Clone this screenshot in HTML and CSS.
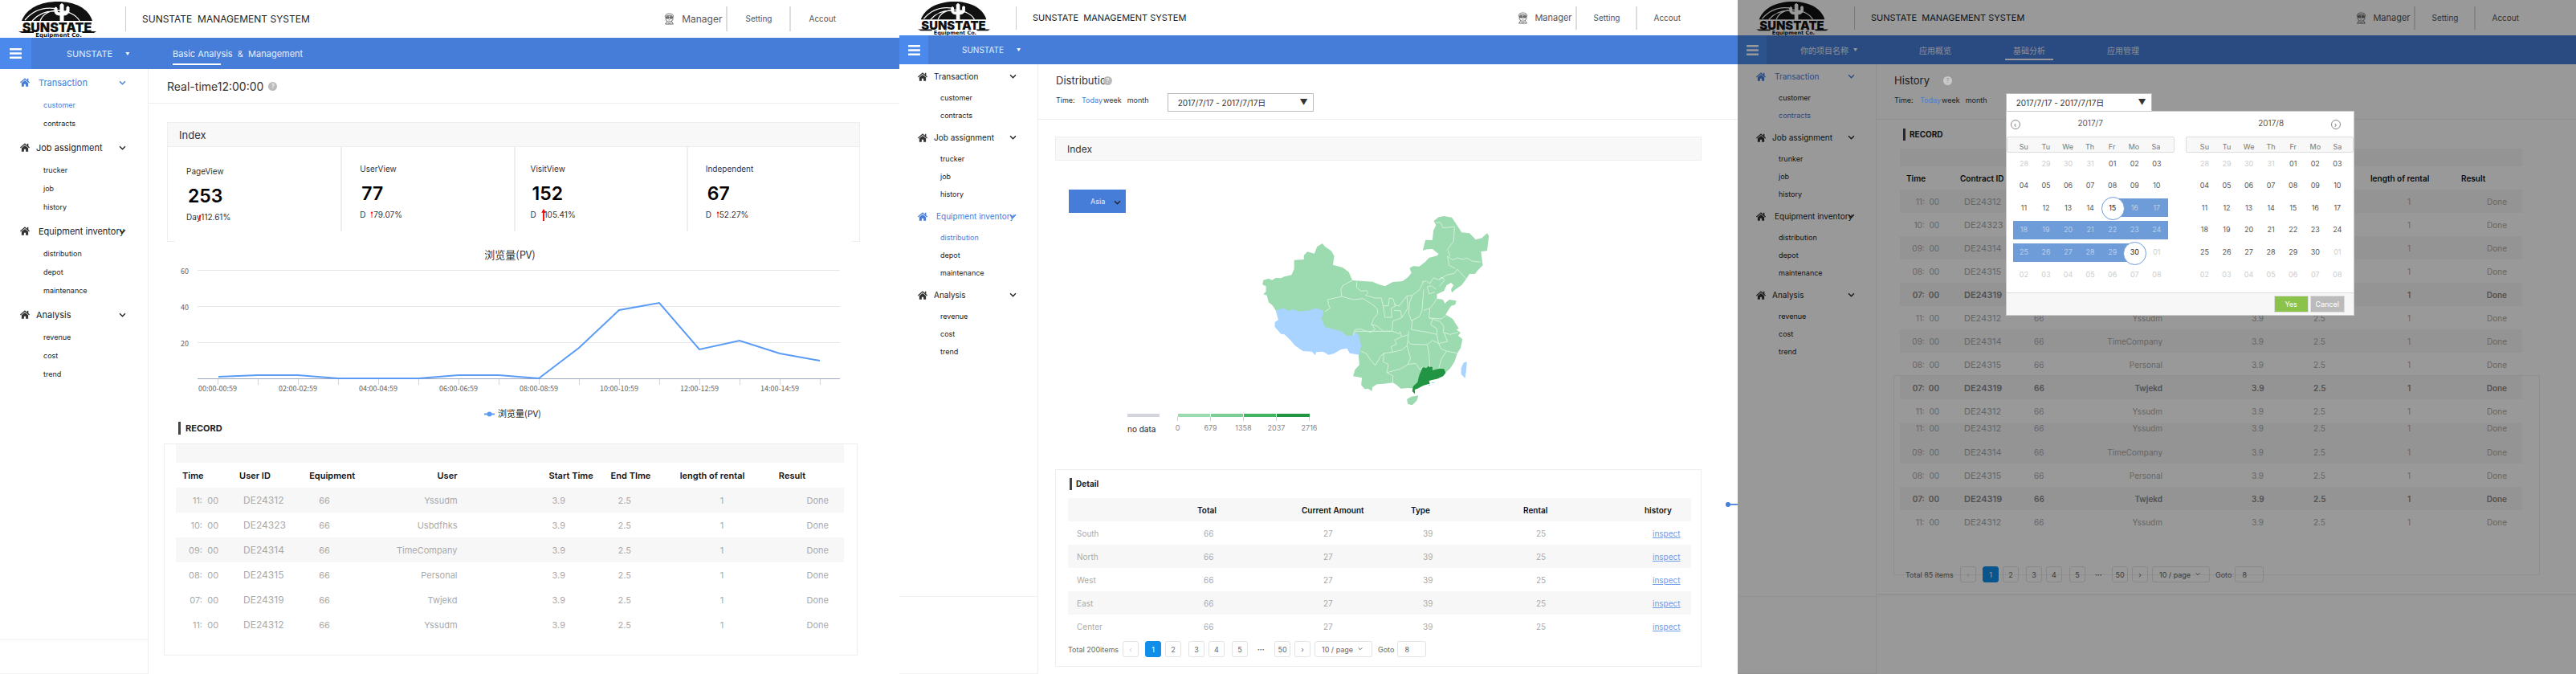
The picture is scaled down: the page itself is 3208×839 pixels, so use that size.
FILE: index.html
```html
<!DOCTYPE html>
<html lang="en">
<head>
<meta charset="utf-8">
<title>Sunstate Management System</title>
<link rel="stylesheet" href="styles.css">
</head>
<body>
<svg class="defs" aria-hidden="true">
  <symbol id="logo" viewBox="0 0 97 46">
    <path d="M4 25C10 9 28 1 49 1s38 8 43 24z"/>
    <path d="M8 24C18 12 32 7 48 10M17 25C24 17 34 12 47 13M27 25C30 17 38 12 49 12s23 5 27 13" fill="none" stroke="#fff" stroke-width="1.3"/>
    <path d="M52 25V5q2-3 4 0v9q4 0 4-3V8q1.500-2 3 0v5q-1 5-7 5v7zM52 18q-7 0-7-5V9q1.500-2 3 0v4q1 2 4 2z" fill="#fff" stroke="#fff"/>
    <text class="logo-name" x="48" y="39" text-anchor="middle">SUNSTATE</text>
    <path d="M0 38h19v2H4zM78 38h19l-3 2H80z"/>
    <text class="logo-sub" x="50" y="45" text-anchor="middle">Equipment Co.</text>
  </symbol>
  <symbol id="home" viewBox="0 0 16 14">
    <path d="M8 0 0 7l1 1.200L8 2.400l7 5.800L16 7l-2.200-2V.8h-2v2.500z"/>
    <path d="M8 3.500 2.500 8v6h4v-4h3v4h4V8z"/>
  </symbol>
  <symbol id="chev" viewBox="0 0 10 7"><path d="M1 1.500 5 5.500l4-4" fill="none" stroke="currentColor" stroke-width="1.600"/></symbol>
  <symbol id="user" viewBox="0 0 14 16">
    <g fill="none" stroke="#555" stroke-width=".9"><path d="M1.500 6C1 2 4 1 7 1s6 1 5.500 5M2 7c0 3 2 5 5 5s5-2 5-5M3 3.500h8M4 11 2 15M10 11l2 4M1.500 15h11M6 9.500h2M5 13l2 2 2-2"/><path d="M2.500 5h3.800v2.500H3zM7.700 5h3.800L11 7.500H7.700z" fill="#777"/></g>
  </symbol>
  <symbol id="menu" viewBox="0 0 16 14"><path d="M0 0h16v2.600H0zM0 5.700h16v2.600H0zM0 11.400h16V14H0z"/></symbol>
</svg>

<div class="board">
<!-- Real-time screen -->
<section class="screen large">
  <header class="top">
    <svg class="logo"><use href="#logo"/></svg>
    <h1 class="title">SUNSTATE  MANAGEMENT SYSTEM</h1>
    <div class="account">
      <svg class="avatar"><use href="#user"/></svg>
      <a class="who" href="#">Manager</a><a class="opt" href="#">Setting</a><a class="opt" href="#">Accout</a>
    </div>
  </header>
  <nav class="bar">
    <button class="menu" aria-label="Menu"><svg><use href="#menu"/></svg></button>
    <a class="project" href="#">SUNSTATE<span class="caret">▼</span></a>
    <a class="tab current" href="#">Basic Analysis  &amp;  Management</a>
  </nav>
  <div class="body">
    <aside class="side">
      <div class="group"><a class="head on shift" href="#"><svg class="home"><use href="#home"/></svg>Transaction<svg class="chev"><use href="#chev"/></svg></a><a class="on" href="#">customer</a><a href="#">contracts</a></div>
      <div class="group"><a class="head" href="#"><svg class="home"><use href="#home"/></svg>Job assignment<svg class="chev"><use href="#chev"/></svg></a><a href="#">trucker</a><a href="#">job</a><a href="#">history</a></div>
      <div class="group"><a class="head shift" href="#"><svg class="home"><use href="#home"/></svg>Equipment inventory<svg class="chev"><use href="#chev"/></svg></a><a href="#">distribution</a><a href="#">depot</a><a href="#">maintenance</a></div>
      <div class="group"><a class="head" href="#"><svg class="home"><use href="#home"/></svg>Analysis<svg class="chev"><use href="#chev"/></svg></a><a href="#">revenue</a><a href="#">cost</a><a href="#">trend</a></div>
      <div class="side-foot"></div>
    </aside>
    <main class="main">
      <div class="page-head"><h2>Real-time12:00:00</h2><span class="help">?</span></div>
      <div class="content">
        <section class="card index">
          <h3 class="card-head">Index</h3>
          <div class="stats">
            <div class="stat low"><span>PageView</span><strong>253</strong><span>Day<svg class="up tight" viewBox="0 0 4 10"><path d="M2 0 4 3H2.800v7H1.200V3H0z"/></svg>112.61%</span></div>
            <div class="stat"><span>UserView</span><strong>77</strong><span>D <svg class="up" viewBox="0 0 4 10"><path d="M2 0 4 3H2.500v7h-1V3H0z"/></svg>79.07%</span></div>
            <div class="stat near"><span>VisitView</span><strong>152</strong><span>D <svg class="up big" viewBox="0 0 6 16"><path d="M3 0 6 5H4v11H2V5H0z"/></svg>105.41%</span></div>
            <div class="stat"><span>Independent</span><strong>67</strong><span>D <svg class="up" viewBox="0 0 4 10"><path d="M2 0 4 3H2.500v7h-1V3H0z"/></svg>52.27%</span></div>
          </div>
        </section>
        <svg class="chart" viewBox="219 299 843 226">
          <text class="c-title" x="636" y="322" text-anchor="middle">浏览量(PV)</text>
          <path class="grid" d="M247 336.500h800M247 381.500h800M247 426.500h800"/>
          <g class="c-num" text-anchor="end"><text x="236" y="341">60</text><text x="236" y="386">40</text><text x="236" y="431">20</text></g>
          <path class="tick" d="M272.500 472v7M322.500 472v7M372.500 472v7M422.500 472v7M472.500 472v7M522.500 472v7M572.500 472v7M622.500 472v7M672.500 472v7M722.500 472v7M772.500 472v7M822.500 472v7M872.500 472v7M922.500 472v7M972.500 472v7M1022.500 472v7"/>
          <path class="axis" d="M247 471.500h800"/>
          <polyline class="line" points="273,469 322,467 372,467 422,471 472,471 522,471 572,467 622,467 672,471 722,433 772,386 822,377 872,435 922,424 972,440 1022,449"/>
          <g class="c-num" text-anchor="middle"><text x="272" y="487">00:00-00:59</text><text x="372" y="487">02:00-02:59</text><text x="472" y="487">04:00-04:59</text><text x="572" y="487">06:00-06:59</text><text x="672" y="487">08:00-08:59</text><text x="772" y="487">10:00-10:59</text><text x="872" y="487">12:00-12:59</text><text x="972" y="487">14:00-14:59</text></g>
          <path class="line" d="M604 515.500h13"/><circle class="dot" cx="610.500" cy="515.500" r="3"/>
          <text class="c-legend" x="621" y="519">浏览量(PV)</text>
        </svg>
        <h3 class="mark">RECORD</h3>
        <section class="card records">
          <div class="band"></div>
          <table class="log">
            <thead><tr><th>Time</th><th>User ID</th><th>Equipment</th><th>User</th><th>Start Time</th><th>End TIme</th><th>length of rental</th><th>Result</th></tr></thead>
            <tbody>
              <tr class="alt"><td>11:  00</td><td>DE24312</td><td>66</td><td>Yssudm</td><td>3.9</td><td>2.5</td><td>1</td><td>Done</td></tr>
              <tr><td>10:  00</td><td>DE24323</td><td>66</td><td>Usbdfhks</td><td>3.9</td><td>2.5</td><td>1</td><td>Done</td></tr>
              <tr class="alt"><td>09:  00</td><td>DE24314</td><td>66</td><td>TimeCompany</td><td>3.9</td><td>2.5</td><td>1</td><td>Done</td></tr>
              <tr><td>08:  00</td><td>DE24315</td><td>66</td><td>Personal</td><td>3.9</td><td>2.5</td><td>1</td><td>Done</td></tr>
              <tr><td>07:  00</td><td>DE24319</td><td>66</td><td>Twjekd</td><td>3.9</td><td>2.5</td><td>1</td><td>Done</td></tr>
              <tr><td>11:  00</td><td>DE24312</td><td>66</td><td>Yssudm</td><td>3.9</td><td>2.5</td><td>1</td><td>Done</td></tr>
            </tbody>
          </table>
        </section>
      </div>
    </main>
  </div>
</section>

<!-- Distribution screen -->
<section class="screen">
  <header class="top">
    <svg class="logo"><use href="#logo"/></svg>
    <h1 class="title">SUNSTATE  MANAGEMENT SYSTEM</h1>
    <div class="account">
      <svg class="avatar"><use href="#user"/></svg>
      <a class="who" href="#">Manager</a><a class="opt" href="#">Setting</a><a class="opt" href="#">Accout</a>
    </div>
  </header>
  <nav class="bar">
    <button class="menu" aria-label="Menu"><svg><use href="#menu"/></svg></button>
    <a class="project" href="#">SUNSTATE<span class="caret">▼</span></a>
  </nav>
  <div class="body">
    <aside class="side">
      <div class="group"><a class="head" href="#"><svg class="home"><use href="#home"/></svg>Transaction<svg class="chev"><use href="#chev"/></svg></a><a href="#">customer</a><a href="#">contracts</a></div>
      <div class="group"><a class="head" href="#"><svg class="home"><use href="#home"/></svg>Job assignment<svg class="chev"><use href="#chev"/></svg></a><a href="#">trucker</a><a href="#">job</a><a href="#">history</a></div>
      <div class="group"><a class="head on shift" href="#"><svg class="home"><use href="#home"/></svg>Equipment inventory<svg class="chev"><use href="#chev"/></svg></a><a class="on" href="#">distribution</a><a href="#">depot</a><a href="#">maintenance</a></div>
      <div class="group"><a class="head" href="#"><svg class="home"><use href="#home"/></svg>Analysis<svg class="chev"><use href="#chev"/></svg></a><a href="#">revenue</a><a href="#">cost</a><a href="#">trend</a></div>
      <div class="side-foot"></div>
    </aside>
    <main class="main">
      <div class="page-head tall"><div class="head-row"><h2>Distributio</h2><span class="help over">?</span></div>
        <div class="filters"><span class="f-label">Time:</span><a class="on" href="#">Today</a><a href="#">week</a><a class="far" href="#">month</a>
          <div class="pick"><select aria-label="Date range"><option>2017/7/17 - 2017/7/17日</option></select><span class="tri">▼</span></div></div>
      </div>
      <div class="content">
        <section class="card index"><h3 class="card-head">Index</h3></section>
        <div class="region"><select aria-label="Region"><option>Asia</option></select><svg class="chev"><use href="#chev"/></svg></div>
        <svg class="map" viewBox="530 410 525 720" preserveAspectRatio="none">
          <path class="land" d="M536 655 548 649 556 655 564 647 576 648 584 642 600 636 606 613 606 580 628 578 628 562 636 549 652 556 658 530 670 518 676 530 690 546 697 565 694 598 716 608 730 625 738 656 784 661 798 671 812 678 830 662 852 659 864 645 872 628 868 610 876 603 890 604 904 586 912 572 930 564 934 558 920 539 908 540 898 544 904 505 920 506 922 470 928 450 923 434 934 420 946 416 964 421 974 446 986 477 1004 480 1018 504 1032 498 1044 480 1048 490 1044 546 1030 548 1034 600 1024 616 1016 632 1004 632 996 652 986 674 972 690 964 702 962 690 968 674 962 665 952 674 946 696 930 708 930 724 944 728 948 742 958 728 974 732 972 746 962 752 954 772 950 784 966 800 974 822 980 836 974 840 984 852 978 862 988 876 984 908 976 930 970 960 960 985 950 1000 940 1012 916 1030 896 1046 880 1060 864 1058 848 1060 838 1046 830 1038 810 1042 794 1044 784 1054 782 1070 774 1060 766 1062 758 1046 760 1020 740 1014 744 990 754 972 752 930 740 900 680 870 600 800 564 768 556 748 548 738 544 712 536 708 542 698 542 678 534 672z"/>
          <path class="blue" d="M564 768 582 760 594 770 604 764 618 772 640 768 654 760 672 768 672 780 668 800 676 830 712 846 726 864 738 862 744 846 754 866 758 900 754 934 732 928 726 910 712 914 696 930 684 934 672 922 656 924 654 936 646 922 626 920 608 900 598 880 584 858 576 856 562 830 562 812 570 804z"/>
          <path class="dark" d="M898 980 906 984 910 977 920 980 920 992 934 986 946 986 950 1002 944 1014 930 1024 912 1030 914 1042 900 1048 886 1060 880 1064 880 1080 874 1070 876 1052 886 1036 890 1010z"/>
          <path class="land" d="M872 1090 888 1086 884 1106 874 1122 864 1118 862 1100z"/>
          <path class="blue" d="M990 964 998 960 997 985 994 1022 985 1006 985 985zM918 1036h6v4h-6zM911 1045h4v4h-4z"/>
          <path class="edge" d="M738 656 716 676 712 690 714 716 740 728 762 724 780 742 794 760 796 780 786 800 782 820 790 838 780 850 770 846 758 838 744 840 740 862M714 716 698 722 682 728 684 748 688 760 676 772M748 660 748 684 758 696 770 694 774 702 768 712 790 722 804 722 808 752 820 750 822 722 830 724 836 752 826 760 828 794 812 794 808 752M780 820 794 826 808 846 828 846 830 808 850 796 848 770 832 768M832 746 844 752 862 714 874 712 890 692 900 660M862 714 864 760 850 796M900 690 896 770 890 792 872 806 866 780 868 740 874 712M874 806 872 840 904 848 930 858 930 836 916 822 920 800 912 796 914 760 900 768M928 690 918 676 908 680 912 706 926 700M896 662 906 658 914 668 922 646 934 654 940 644 948 654 936 678M936 654 952 636 970 630 976 614 996 650M954 566 966 580 976 572 990 578 998 572 1010 584 1030 588M954 566 958 600 972 612M928 440 938 440 944 460 970 456 968 510 954 540 960 566M930 724 922 745 914 760M912 796 940 800 954 784M920 800 938 810 946 830 944 850 960 858 978 850M946 850 954 884 934 892 930 858M866 846 864 880 870 894 908 896 920 880 934 892M846 846 850 866 864 860M850 866 834 880 838 894 826 904 830 924 850 916 862 900 864 880M758 920 770 930 778 950 790 974 802 940 810 928 830 924M862 900 870 946 864 970 882 966 892 990 898 980M908 896 912 930 914 980M934 892 940 912 952 920 940 950 934 986M952 920 976 928M810 928 808 960 820 970 816 1000 830 1012 830 1038M816 1000 846 988 864 970M744 846 808 846 828 846 846 856"/>
        </svg>
        <div class="scale">
          <div class="nodata"><i></i>no data</div>
          <div class="ramp"><div class="r1">0</div><div class="r2">679</div><div class="r3">1358</div><div class="r4">2037</div><div class="r5">2716</div></div>
        </div>
        <section class="card detail">
          <h3 class="mark">Detail</h3>
          <table class="areas">
            <thead><tr><th></th><th>Total</th><th>Current Amount</th><th>Type</th><th>Rental</th><th>history</th></tr></thead>
            <tbody>
              <tr><td>South</td><td>66</td><td>27</td><td>39</td><td>25</td><td><a href="#">inspect</a></td></tr>
              <tr class="alt"><td>North</td><td>66</td><td>27</td><td>39</td><td>25</td><td><a href="#">inspect</a></td></tr>
              <tr><td>West</td><td>66</td><td>27</td><td>39</td><td>25</td><td><a href="#">inspect</a></td></tr>
              <tr class="alt"><td>East</td><td>66</td><td>27</td><td>39</td><td>25</td><td><a href="#">inspect</a></td></tr>
              <tr><td>Center</td><td>66</td><td>27</td><td>39</td><td>25</td><td><a href="#">inspect</a></td></tr>
            </tbody>
          </table>
          <div class="pager"><span class="total">Total 200items</span><button class="faint">‹</button><button class="now">1</button><button>2</button><button class="gap">3</button><button>4</button><button class="gap">5</button><span class="dots">•••</span><button>50</button><button>›</button><span class="size"><select aria-label="Page size"><option>10 / page</option></select><svg class="chev"><use href="#chev"/></svg></span><label>Goto<input value="8"></label></div>
        </section>
      </div>
      <div class="handle"><i></i></div>
    </main>
  </div>
</section>

<!-- History screen with the date picker open -->
<section class="screen dimmed">
  <header class="top">
    <svg class="logo"><use href="#logo"/></svg>
    <h1 class="title">SUNSTATE  MANAGEMENT SYSTEM</h1>
    <div class="account">
      <svg class="avatar"><use href="#user"/></svg>
      <a class="who" href="#">Manager</a><a class="opt" href="#">Setting</a><a class="opt" href="#">Accout</a>
    </div>
  </header>
  <nav class="bar">
    <button class="menu" aria-label="Menu"><svg><use href="#menu"/></svg></button>
    <a class="project cn" href="#">你的项目名称<span class="caret">▼</span></a>
    <div class="tabs"><a class="tab" href="#">应用概览</a><a class="tab current" href="#">基础分析</a><a class="tab" href="#">应用管理</a></div>
  </nav>
  <div class="body">
    <aside class="side">
      <div class="group"><a class="head on shift" href="#"><svg class="home"><use href="#home"/></svg>Transaction<svg class="chev"><use href="#chev"/></svg></a><a href="#">customer</a><a class="on" href="#">contracts</a></div>
      <div class="group"><a class="head" href="#"><svg class="home"><use href="#home"/></svg>Job assignment<svg class="chev"><use href="#chev"/></svg></a><a href="#">trunker</a><a href="#">job</a><a href="#">history</a></div>
      <div class="group"><a class="head shift" href="#"><svg class="home"><use href="#home"/></svg>Equipment inventory<svg class="chev"><use href="#chev"/></svg></a><a href="#">distribution</a><a href="#">depot</a><a href="#">maintenance</a></div>
      <div class="group"><a class="head" href="#"><svg class="home"><use href="#home"/></svg>Analysis<svg class="chev"><use href="#chev"/></svg></a><a href="#">revenue</a><a href="#">cost</a><a href="#">trend</a></div>
      <div class="side-foot"></div>
    </aside>
    <main class="main">
      <div class="page-head tall"><div class="head-row"><h2>History</h2><span class="help lifted">?</span></div>
        <div class="filters"><span class="f-label">Time:</span><a class="on lifted" href="#">Today</a><a href="#">week</a><a class="far" href="#">month</a>
          <div class="pick lifted"><select aria-label="Date range"><option>2017/7/17 - 2017/7/17日</option></select><span class="tri">▼</span>
            <div class="picker">
              <div class="months">
                <div class="month">
                  <div class="m-head"><button class="turn" aria-label="Previous month">‹</button><b>2017/7</b></div>
                  <div class="week"><span>Su</span><span>Tu</span><span>We</span><span>Th</span><span>Fr</span><span>Mo</span><span>Sa</span></div>
                  <div class="days">
                    <button class="off">28</button><button class="off">29</button><button class="off">30</button><button class="off">31</button><button>01</button><button>02</button><button>03</button>
                    <button>04</button><button>05</button><button>06</button><button>07</button><button>08</button><button>09</button><button>10</button>
                    <button>11</button><button>12</button><button>13</button><button>14</button><button class="end from">15</button><button class="in">16</button><button class="in">17</button>
                    <button class="in">18</button><button class="in">19</button><button class="in">20</button><button class="in">21</button><button class="in">22</button><button class="in">23</button><button class="in">24</button>
                    <button class="in">25</button><button class="in">26</button><button class="in">27</button><button class="in">28</button><button class="in">29</button><button class="end to">30</button><button class="off">01</button>
                    <button class="off">02</button><button class="off">03</button><button class="off">04</button><button class="off">05</button><button class="off">06</button><button class="off">07</button><button class="off">08</button>
                  </div>
                </div>
                <div class="month second">
                  <div class="m-head"><b>2017/8</b><button class="turn" aria-label="Next month">›</button></div>
                  <div class="week"><span>Su</span><span>Tu</span><span>We</span><span>Th</span><span>Fr</span><span>Mo</span><span>Sa</span></div>
                  <div class="days">
                    <button class="off">28</button><button class="off">29</button><button class="off">30</button><button class="off">31</button><button>01</button><button>02</button><button>03</button>
                    <button>04</button><button>05</button><button>06</button><button>07</button><button>08</button><button>09</button><button>10</button>
                    <button>11</button><button>12</button><button>13</button><button>14</button><button>15</button><button>16</button><button>17</button>
                    <button>18</button><button>19</button><button>20</button><button>21</button><button>22</button><button>23</button><button>24</button>
                    <button>25</button><button>26</button><button>27</button><button>28</button><button>29</button><button>30</button><button class="off">01</button>
                    <button class="off">02</button><button class="off">03</button><button class="off">04</button><button class="off">05</button><button class="off">06</button><button class="off">07</button><button class="off">08</button>
                  </div>
                </div>
              </div>
              <div class="p-foot"><button class="yes">Yes</button><button class="no">Cancel</button></div>
            </div>
          </div></div>
      </div>
      <div class="content history">
        <h3 class="mark">RECORD</h3>
        <div class="band"></div>
        <table class="log">
          <thead><tr><th>Time</th><th>Contract ID</th><th>Equipment</th><th>User</th><th>Start Time</th><th>End TIme</th><th>length of rental</th><th>Result</th></tr></thead>
          <tbody>
            <tr class="alt"><td>11:  00</td><td>DE24312</td><td>66</td><td>Yssudm</td><td>3.9</td><td>2.5</td><td>1</td><td>Done</td></tr>
            <tr><td>10:  00</td><td>DE24323</td><td>66</td><td>Usbdfhks</td><td>3.9</td><td>2.5</td><td>1</td><td>Done</td></tr>
            <tr class="alt"><td>09:  00</td><td>DE24314</td><td>66</td><td>TimeCompany</td><td>3.9</td><td>2.5</td><td>1</td><td>Done</td></tr>
            <tr><td>08:  00</td><td>DE24315</td><td>66</td><td>Personal</td><td>3.9</td><td>2.5</td><td>1</td><td>Done</td></tr>
            <tr class="alt strong"><td>07:  00</td><td>DE24319</td><td>66</td><td>Twjekd</td><td>3.9</td><td>2.5</td><td>1</td><td>Done</td></tr>
            <tr><td>11:  00</td><td>DE24312</td><td>66</td><td>Yssudm</td><td>3.9</td><td>2.5</td><td>1</td><td>Done</td></tr>
            <tr class="alt"><td>09:  00</td><td>DE24314</td><td>66</td><td>TimeCompany</td><td>3.9</td><td>2.5</td><td>1</td><td>Done</td></tr>
            <tr><td>08:  00</td><td>DE24315</td><td>66</td><td>Personal</td><td>3.9</td><td>2.5</td><td>1</td><td>Done</td></tr>
            <tr class="alt strong"><td>07:  00</td><td>DE24319</td><td>66</td><td>Twjekd</td><td>3.9</td><td>2.5</td><td>1</td><td>Done</td></tr>
            <tr><td>11:  00</td><td>DE24312</td><td>66</td><td>Yssudm</td><td>3.9</td><td>2.5</td><td>1</td><td>Done</td></tr>
            <tr class="alt short"><td>11:  00</td><td>DE24312</td><td>66</td><td>Yssudm</td><td>3.9</td><td>2.5</td><td>1</td><td>Done</td></tr>
            <tr class="alt"><td>09:  00</td><td>DE24314</td><td>66</td><td>TimeCompany</td><td>3.9</td><td>2.5</td><td>1</td><td>Done</td></tr>
            <tr><td>08:  00</td><td>DE24315</td><td>66</td><td>Personal</td><td>3.9</td><td>2.5</td><td>1</td><td>Done</td></tr>
            <tr class="alt strong"><td>07:  00</td><td>DE24319</td><td>66</td><td>Twjekd</td><td>3.9</td><td>2.5</td><td>1</td><td>Done</td></tr>
            <tr><td>11:  00</td><td>DE24312</td><td>66</td><td>Yssudm</td><td>3.9</td><td>2.5</td><td>1</td><td>Done</td></tr>
          </tbody>
        </table>
        <div class="pager"><span class="total">Total 85 items</span><button class="faint">‹</button><button class="now">1</button><button>2</button><button class="gap">3</button><button>4</button><button class="gap">5</button><span class="dots">•••</span><button>50</button><button>›</button><span class="size"><select aria-label="Page size"><option>10 / page</option></select><svg class="chev"><use href="#chev"/></svg></span><label>Goto<input value="8"></label></div>
      </div>
      <div class="main-foot"></div>
    </main>
  </div>
  <div class="veil"></div>
</section>
</div>
</body>
</html>
```
FILE: styles.css
```css
* { box-sizing: border-box; }
body { margin: 0; background: #fff; font-family: Inter, "Noto Sans CJK SC", sans-serif; color: #333; }
h1, h2, h3 { margin: 0; font-weight: 400; }
a { color: inherit; text-decoration: none; }
button, select, input { font: inherit; color: inherit; margin: 0; padding: 0; border: 0; background: none; border-radius: 0; }
select { appearance: none; }
svg { display: block; fill: currentColor; flex: none; }
.defs { position: absolute; width: 0; height: 0; }
.logo { overflow: visible; }
.logo-name { font: 900 16px Inter, sans-serif; }
.logo-sub { font: 700 7px "DejaVu Sans", sans-serif; }

.board { display: grid; grid-template-columns: 1120fr 1044fr 1044fr; min-height: 100vh; }
.screen {
  --top: 44px; --bar: 36px; --side: 173px; --row: 29px;
  --f-title: 11px; --f-head: 10px; --f-page: 13px; --f-index: 12px; --f-cell: 10px; --f-id: 11px;
  --head-h: 30px; --sub-h: 22px;
  position: relative; display: flex; flex-direction: column; min-width: 0; font-size: var(--f-cell);
}
.large {
  --top: 47px; --bar: 39px; --side: 185px; --row: 31px;
  --f-title: 12px; --f-head: 11px; --f-page: 14px; --f-index: 13px; --f-cell: 11px; --f-id: 12px;
  --head-h: 33px; --sub-h: 23px;
}

/* top strip */
.top { display: flex; align-items: center; height: var(--top); padding-left: 23px; color: #111; }
.logo { width: 90px; height: 43px; }
.large .logo { width: 97px; height: 46px; }
.title { margin-left: 32px; padding: 8px 0 8px 20px; border-left: 1px solid #ccc; font-size: var(--f-title); line-height: 13px; white-space: pre; color: #222; }
.large .title { margin-left: 36px; line-height: 15px; }
.account { display: flex; align-items: center; margin-left: auto; margin-right: 50px; color: #555; line-height: 29px; }
.large .account { margin-right: 58px; line-height: 31px; }
.avatar { width: 13px; height: 15px; }
.who { padding: 0 5px 0 8px; font-size: var(--f-title); }
.large .who { padding-left: 9px; }
.opt { padding: 0 20px; border-left: 2px solid #ddd; font-size: 10px; }
.large .opt { padding: 0 22px; }
.account .opt:last-child { padding-right: 21px; }

/* blue bar */
.bar { display: flex; align-items: stretch; height: var(--bar); background: #457dd9; color: #e6eefb; font-size: var(--f-head); }
.menu { width: 36px; background: #4b8aec; color: #fff; padding-left: 11px; }
.large .menu { width: 39px; padding-left: 12px; }
.menu svg { width: 15px; height: 13px; }
.project { display: flex; align-items: center; width: 152px; padding-left: 42px; }
.large .project { width: 176px; padding-left: 44px; }
.caret { margin-left: 16px; font-size: 5px; color: #fff; }
.cn .caret { margin-left: 6px; }
.tabs { display: flex; gap: 57px; margin-left: 28px; }
.tab { position: relative; display: flex; align-items: center; justify-content: center; white-space: pre; }
.tabs .tab { width: 60px; }
.tab.current::after { content: ""; position: absolute; left: 0; bottom: 5px; width: 60px; height: 2px; background: #fff; }

/* side navigation */
.body { display: flex; flex: 1; }
.side { display: flex; flex-direction: column; width: var(--side); flex: none; border-right: 1px solid #eee; }
.group { display: flex; flex-direction: column; margin-bottom: 2px; }
.group a { display: flex; align-items: center; height: var(--sub-h); padding-left: 51px; font-size: 9px; color: #222; white-space: nowrap; }
.large .group a { padding-left: 54px; }
.group .head, .large .group .head { position: relative; height: var(--head-h); padding-left: 23px; font-size: var(--f-head); }
.large .group .head { padding-left: 25px; }
.group a.on, .filters .on { color: #457dd9; }
.home { width: 12px; height: 11px; margin-right: 8px; color: #333; }
.shift .home { margin-right: 11px; }
.on .home { color: inherit; }
.chev { width: 9px; height: 6px; }
.head .chev { position: absolute; right: 26px; }
.large .head .chev { right: 27px; }
.side-foot { height: 97px; margin-top: auto; border: solid #f2f2f2; border-width: 1px 0; }
.large .side-foot { height: 43px; }

/* page heading */
.main { position: relative; flex: 1; min-width: 0; }
.page-head { display: flex; align-items: center; height: 43px; padding-left: 23px; border-bottom: 1px solid #eee; }
.page-head h2 { font-size: var(--f-page); }
.page-head.tall { display: block; height: 69px; padding: 12px 0 0 22px; }
.head-row { display: flex; align-items: center; height: 16px; }
.help { display: inline-flex; align-items: center; justify-content: center; width: 11px; height: 11px; margin-left: 6px; border-radius: 50%; background: #bbb; color: #fff; font-size: 8px; }
.help.over { margin-left: -4px; }
.help.lifted { margin-left: 17px; background: #c8c8c8; color: #999; }
.filters { display: flex; align-items: flex-start; margin-top: 8px; font-size: 9px; line-height: 18px; }
.f-label { width: 32px; }
.filters .on { width: 27px; }
.week-link { width: 28px; }
.far { width: 50px; margin-left: 7px; }
.pick { position: relative; width: 182px; font-size: 10px; }
.pick select { display: block; width: 100%; height: 23px; padding-left: 12px; border: 1px solid #bbb; background: #fff; }
.tri { position: absolute; right: 7px; top: 2px; font-size: 10px; pointer-events: none; }

/* cards */
.content { padding: 21px 45px 0 21px; }
.large .content { padding: 23px 49px 0 23px; }
.card { border: 1px solid #eee; }
.card-head { height: 28px; padding-left: 14px; background: #f8f8f8; font-size: var(--f-index); line-height: 29px; }
.large .card-head { height: 30px; line-height: 31px; border-bottom: 1px solid #eee; }
.stats { display: grid; grid-template-columns: repeat(4, 1fr); height: 117px; padding-bottom: 12px; }
.stat { display: flex; flex-direction: column; padding: 20px 0 0 22px; border-left: 2px solid #eee; font-size: 10px; }
.stat:first-child { border-left: 0; }
.stat.low { padding-top: 23px; padding-left: 23px; }
.stat.near { padding-left: 19px; }
.stat span { display: flex; white-space: pre; line-height: 14px; }
.stat strong { margin: 10px 0 5px 2px; font-size: 23px; font-weight: 600; line-height: 28px; color: #000; }
.up { width: 4px; height: 8px; margin: 3px 0 0 3px; color: red; }
.up.tight { margin: 4px -1px 0 -3px; }
.up.big { width: 6px; height: 15px; margin: 0 -2px -2px 3px; }

/* line chart */
.chart { position: relative; display: block; width: calc(100% - 20px); margin: -2px 10px 0; background: #fff; }
.chart text { font-family: "Noto Sans CJK SC", sans-serif; fill: #333; }
.chart .c-title { font-size: 13px; }
.chart .c-legend { font-size: 11px; fill: #222; }
.chart .c-num text { font-size: 9px; fill: #666; }
.grid { stroke: #e6e6e6; }
.tick { stroke: #ccd6eb; }
.axis { stroke: #9aa7bf; }
.line { fill: none; stroke: #5a9cf5; stroke-width: 2; }
.dot { fill: #5a9cf5; }

/* record tables */
.mark { margin-left: 17px; padding-left: 5px; border-left: 3px solid #444; font-size: 10px; font-weight: 700; line-height: 15px; color: #222; }
.large .mark { margin-left: 14px; padding-left: 6px; font-size: 11px; line-height: 16px; }
.records { margin: 11px 3px 0 -4px; padding: 0 16px 22px 14px; }
.band { height: 22px; background: #f7f7f7; }
.large .band { height: 23px; }
table { width: 100%; table-layout: fixed; border-collapse: collapse; font-size: var(--f-cell); }
th, td { height: var(--row); padding: 0; text-align: left; white-space: pre; line-height: 14px; }
th { font-weight: 600; color: #111; }
td { color: #aaa; }
.alt td { background: #f7f7f7; }
.log th:nth-child(1) { width: 79px; padding-left: 8px; }
.log th:nth-child(2) { width: 87px; }
.log th:nth-child(3) { width: 84px; }
.log th:nth-child(4) { width: 214px; padding-right: 114px; text-align: right; }
.log th:nth-child(5) { width: 77px; }
.log th:nth-child(6) { width: 86px; }
.log th:nth-child(7) { width: 123px; }
.log th:nth-child(8) { width: 81px; }
.log td:nth-child(1) { padding-right: 26px; text-align: right; }
.log td:nth-child(2) { padding-left: 5px; font-size: var(--f-id); }
.log td:nth-child(3) { padding-left: 12px; }
.log td:nth-child(4) { padding-right: 114px; text-align: right; }
.log td:nth-child(5) { padding-left: 4px; }
.log td:nth-child(6) { padding-left: 9px; }
.log td:nth-child(7) { padding-left: 50px; }
.log td:nth-child(8) { padding-right: 19px; text-align: right; }

/* distribution map */
.region { position: relative; width: 71px; height: 29px; margin: 36px 0 0 17px; background: #457dd9; color: #e6eefb; font-size: 9px; }
.region select { width: 100%; height: 100%; padding-left: 27px; }
.region .chev { position: absolute; right: 6px; top: 13px; color: #222; pointer-events: none; }
.region option { color: #222; }
.map { width: 288px; height: 240px; margin: 2px 0 0 256px; }
.land { fill: #9cdaaf; }
.blue { fill: #a8d4ff; }
.dark { fill: #229544; }
.edge { fill: none; stroke: #d2f0dc; vector-effect: non-scaling-stroke; }
.scale { display: flex; margin: 8px 0 0 90px; }
.nodata { width: 62px; font-size: 10px; line-height: 30px; color: #223; }
.nodata i { display: block; width: 40px; height: 4px; background: #d2d5dc; }
.ramp { display: flex; font-size: 9px; color: #888; }
.ramp div { position: relative; display: flex; justify-content: center; width: 41px; margin-left: -20px; margin-right: 20px; padding-top: 11px; line-height: 14px; }
.ramp div::before { content: ""; position: absolute; left: 20px; top: 0; width: 41px; height: 4px; border-left: 1px solid #fff; background: var(--c); }
.ramp div::after { content: ""; position: absolute; left: 20px; top: 4px; width: 1px; height: 5px; background: #ccc; }
.r1 { --c: #9cdaaf; } .r2 { --c: #7ccd94; } .r3 { --c: #42b362; } .r4 { --c: #229544; }
.ramp .r5::before { display: none; }
.detail { margin-top: 35px; padding: 10px 12px 11px 15px; }
.detail .mark { margin: 0 0 10px 2px; }
.areas thead th { background: #f7f7f7; }
.areas th:nth-child(1) { width: 161px; }
.areas th:nth-child(2) { width: 130px; }
.areas th:nth-child(3) { width: 136px; }
.areas th:nth-child(4) { width: 140px; }
.areas th:nth-child(5) { width: 151px; }
.areas th:nth-child(6) { width: 58px; }
.areas td:nth-child(1) { padding-left: 11px; }
.areas td:nth-child(2) { padding-left: 8px; }
.areas td:nth-child(3) { padding-left: 27px; }
.areas td:nth-child(4) { padding-left: 15px; }
.areas td:nth-child(5) { padding-left: 16px; }
.areas td:nth-child(6) { padding-left: 10px; }
.areas a { color: #6c9de8; text-decoration: underline; }
.handle { position: absolute; right: 0; top: 547px; width: 12px; height: 2px; background: #5a8fe6; }
.handle i { position: absolute; left: -3px; top: -2px; width: 6px; height: 6px; border-radius: 50%; background: #457dd9; }

/* pager */
.pager { display: flex; align-items: center; margin-top: 4px; font-size: 9px; color: #666; }
.total { width: 68px; white-space: nowrap; }
.pager button, .pager input, .size { height: 20px; border: 1px solid #e3e3e3; border-radius: 3px; }
.pager button { width: 20px; margin-right: 5px; text-align: center; }
.pager .faint { margin-right: 8px; color: #ccc; }
.pager .gap { margin-left: 4px; }
.pager .now { background: #108ee9; border-color: #108ee9; color: #fff; }
.dots { width: 28px; padding-left: 7px; font-size: 5px; }
.size { position: relative; width: 72px; margin-right: 7px; }
.size select { width: 100%; height: 100%; padding-left: 8px; }
.size .chev { position: absolute; right: 11px; top: 6px; width: 6px; height: 5px; }
.pager label { display: flex; align-items: center; gap: 4px; }
.pager input { width: 36px; padding-left: 8px; }

/* history */
.dimmed .content { padding: 11px 67px 0 29px; }
.dimmed .mark { margin-left: 4px; }
.dimmed .band { margin-top: 10px; }
.dimmed .log th:nth-child(1) { width: 75px; }
.dimmed .log th:nth-child(2) { width: 80px; }
.dimmed .log th:nth-child(3) { width: 79px; }
.dimmed .log th:nth-child(4) { width: 200px; }
.dimmed .log th:nth-child(5) { width: 72px; }
.dimmed .log th:nth-child(6) { width: 80px; }
.dimmed .log th:nth-child(7) { width: 113px; }
.dimmed .log th:nth-child(8) { width: 76px; }
.dimmed .log td:nth-child(4) { padding-right: 107px; }
.dimmed .log td:nth-child(7) { padding-left: 46px; }
.short td { height: 22px; padding-bottom: 8px; }
.strong td { font-weight: 600; color: #888; }
.content.history { position: relative; padding-bottom: 0; }
.history::before { content: ""; position: absolute; left: 21px; right: 45px; top: 318px; height: 247px; border: 1px solid #eee; }
.history > * { position: relative; }
.history .pager { margin: 41px 0 0 7px; }
.main-foot { position: absolute; left: 0; right: 0; bottom: 98px; border-top: 1px solid #e6e6e6; }
.veil { position: absolute; inset: 0; background: rgba(0, 0, 0, .4); z-index: 1; pointer-events: none; }
.lifted { position: relative; z-index: 2; }

/* date picker */
.picker { position: absolute; left: 0; top: 22px; width: 434px; border: 1px solid #ccc; background: #fff; color: #555; font-size: 9px; }
.months { display: flex; justify-content: space-between; }
.month { width: 209px; }
.m-head { position: relative; display: flex; justify-content: center; align-items: center; height: 31px; padding-bottom: 4px; font-size: 10px; }
.m-head b { font-weight: 400; }
.second .m-head b { margin-left: 4px; }
.turn { position: absolute; left: 5px; top: 10px; width: 12px; height: 12px; border: 1px solid #888; border-radius: 50%; line-height: 9px; font-size: 8px; text-align: center; }
.m-head .turn { border: 1px solid #888; border-radius: 50%; }
.second .turn { left: auto; right: 16px; }
.week, .days { display: grid; grid-template-columns: repeat(7, 1fr); text-align: center; }
.week { height: 20px; padding: 3px 8px 0 7px; border: 1px solid #ddd; border-radius: 2px; background: #f8f8f8; color: #777; line-height: 18px; }
.days { height: 166px; margin: 0 8px 8px; grid-auto-rows: 1fr; }
.days button { height: 23px; margin: 2px 0; }
.second .days { margin: 0 6px 8px 10px; }
.second .week { padding: 3px 5px 0 9px; }
.days .off { color: #ccc; }
.days .in { background: #6d9cd8; color: #b9d0ee; }
.end { position: relative; z-index: 0; }
.end::before { content: ""; position: absolute; z-index: -1; left: 0; top: -2px; width: 27px; height: 27px; border: 1px solid #6d9cd8; border-radius: 50%; background: #fff; }
.days .end { color: #222; }
.days .from { background: linear-gradient(90deg, #fff 50%, #6d9cd8 50%); }
.days .to { background: linear-gradient(90deg, #6d9cd8 50%, #fff 50%); }
.p-foot { display: flex; justify-content: flex-end; gap: 2px; height: 28px; padding: 3px 11px 0 0; border-top: 1px solid #ddd; background: #f7f7f7; color: #fff; }
.p-foot button { width: 43px; height: 21px; border: 1px solid #ddd; }
.p-foot .yes { background: #8bc34a; }
.p-foot .no { background: #bbb; }
```
